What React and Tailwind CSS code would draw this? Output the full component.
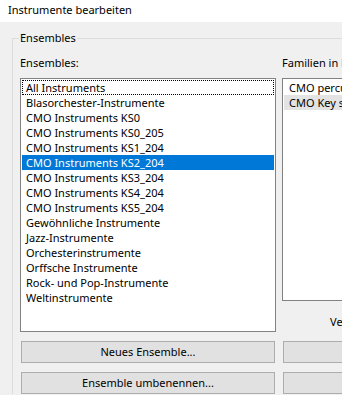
import React from "react";

const ensembles = [
  "All Instruments",
  "Blasorchester-Instrumente",
  "CMO Instruments KS0",
  "CMO Instruments KS0_205",
  "CMO Instruments KS1_204",
  "CMO Instruments KS2_204",
  "CMO Instruments KS3_204",
  "CMO Instruments KS4_204",
  "CMO Instruments KS5_204",
  "Gewöhnliche Instrumente",
  "Jazz-Instrumente",
  "Orchesterinstrumente",
  "Orffsche Instrumente",
  "Rock- und Pop-Instrumente",
  "Weltinstrumente"
];

const families = ["CMO percussion", "CMO Key switches"];

function Button({ children }) {
  return (
    <button className="mx-[1px] h-[22px] border border-[#adadad] bg-[#e1e1e1] text-[11px] leading-[20px] text-black">
      {children}
    </button>
  );
}

export default function App() {
  const selected = 5;

  return (
    <div className="h-[395px] w-[342px] overflow-hidden bg-[#f0f0f0] font-['Noto_Sans',sans-serif] text-[11px] text-black">
      <div className="h-[22px] bg-white pl-[8px] pt-[2px] leading-[15px]">Instrumente bearbeiten</div>

      <div className="pl-[12px] pt-[16px]">
        <div className="relative w-[520px] border-l border-t border-[#dcdcdc]">
          <span className="absolute -top-[9px] left-[6px] bg-[#f0f0f0] px-[1px] leading-[15px]">Ensembles</span>

          <div className="flex gap-[6px] pl-[7px] pt-[16px]">
            {/* Ensembles list */}
            <div className="flex w-[256px] shrink-0 flex-col">
              <div className="h-[15px] leading-[15px]">Ensembles:</div>
              <div className="mt-[8px] h-[254px] border border-[#828282] bg-white p-[1px]">
                {ensembles.map((name, i) => (
                  <div
                    key={name}
                    className={
                      "h-[15px] whitespace-nowrap pl-[4px] leading-[15px] " +
                      (i === selected ? "bg-[#0078d7] text-white " : "") +
                      (i === 0 ? "outline outline-1 outline-dotted outline-offset-[-1px] outline-black" : "")
                    }
                  >
                    {name}
                  </div>
                ))}
              </div>
              <div className="mt-[9px] flex flex-col gap-[9px]">
                <Button>Neues Ensemble...</Button>
                <Button>Ensemble umbenennen...</Button>
              </div>
            </div>

            {/* Families list */}
            <div className="flex w-[240px] shrink-0 flex-col">
              <div className="h-[15px] whitespace-nowrap leading-[15px]">Familien in Ensemble</div>
              <div className="mt-[8px] h-[223px] border border-[#828282] bg-white p-[1px]">
                {families.map((name, i) => (
                  <div
                    key={name}
                    className={"h-[15px] whitespace-nowrap pl-[5px] leading-[15px] " + (i === 1 ? "bg-[#e3e3e3]" : "")}
                  >
                    {name}
                  </div>
                ))}
              </div>
              <div className="ml-[48px] mt-[13px] h-[15px] whitespace-nowrap leading-[15px]">Verfügbare Instrumente</div>
              <div className="mt-[12px] flex flex-col gap-[9px]">
                <Button>Hinzufügen</Button>
                <Button>Entfernen</Button>
              </div>
            </div>
          </div>
        </div>
      </div>
    </div>
  );
}
